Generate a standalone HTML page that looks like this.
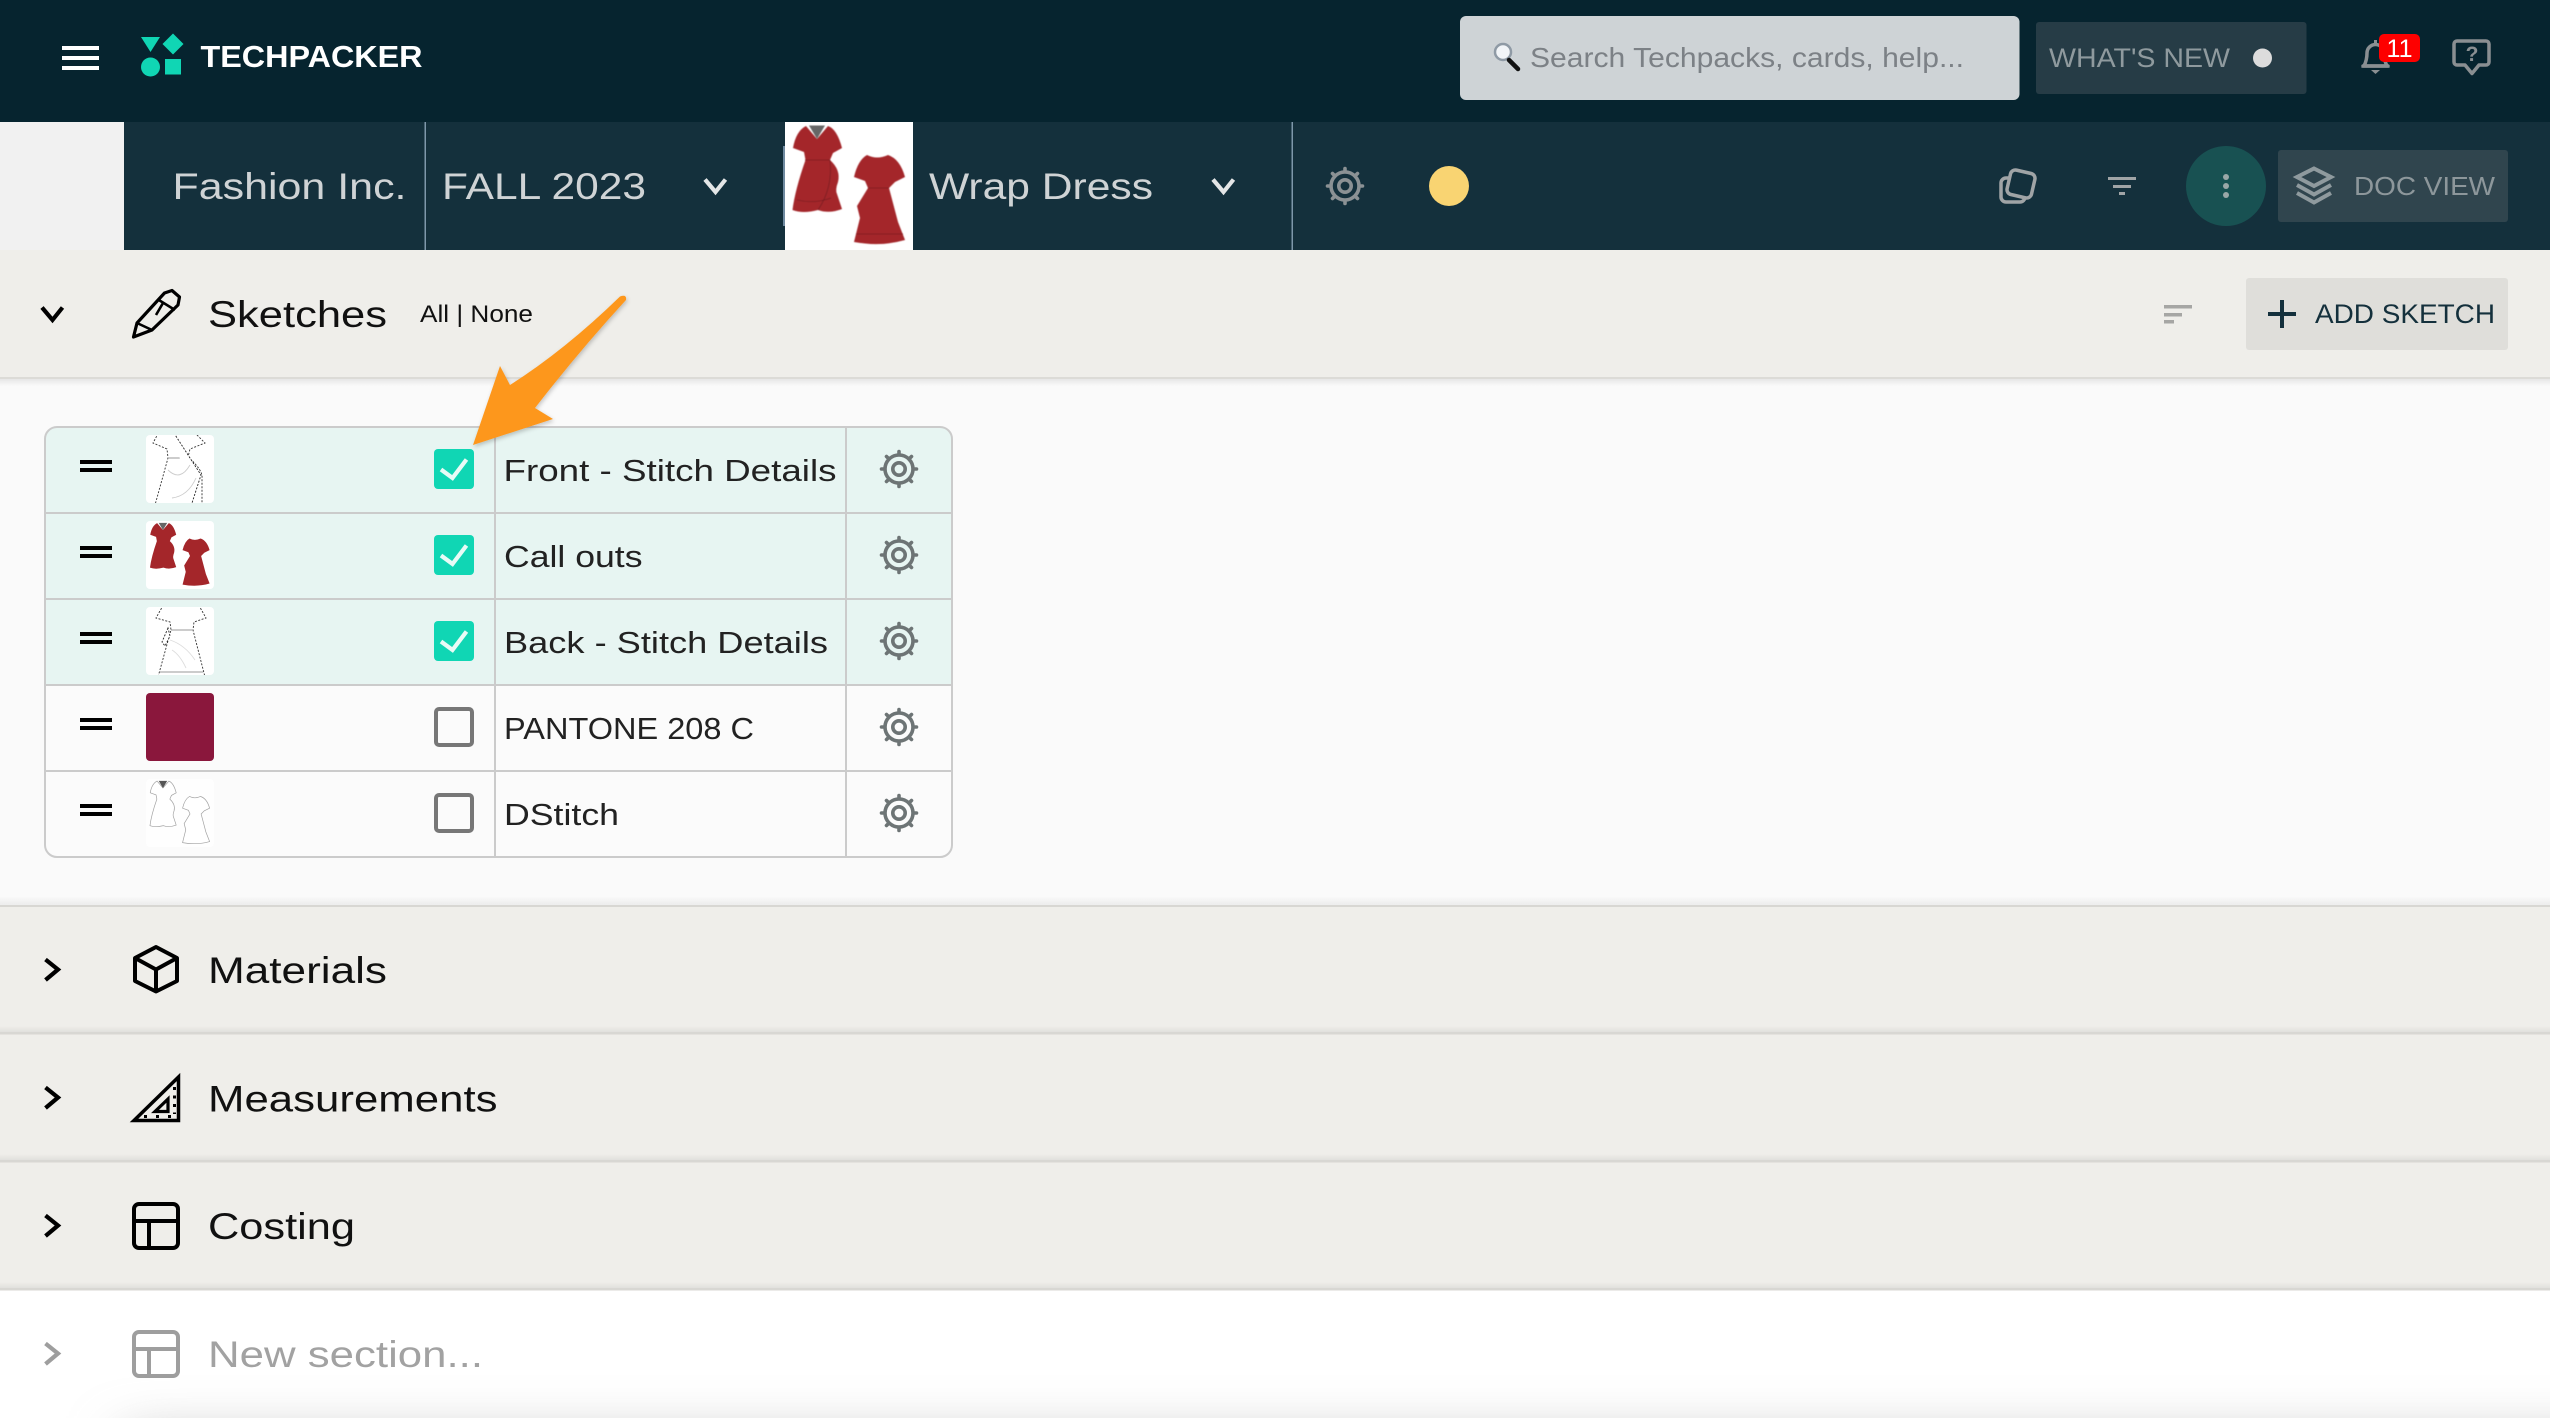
<!DOCTYPE html>
<html lang="en">
<head>
<meta charset="utf-8">
<title>Techpacker</title>
<style>
html,body{margin:0;padding:0;background:#fff;width:2550px;height:1418px;overflow:hidden}
svg{display:block;position:absolute;left:0;top:0}
text{font-family:"Liberation Sans",Arial,sans-serif}
</style>
</head>
<body>
<svg xmlns="http://www.w3.org/2000/svg" width="2550" height="1418" viewBox="0 0 2550 1418">
<defs>
  <filter id="blur" x="-20%" y="-400%" width="140%" height="900%"><feGaussianBlur stdDeviation="28"/></filter>
  <filter id="sh" x="-20%" y="-20%" width="140%" height="140%"><feDropShadow dx="1" dy="2" stdDeviation="2" flood-color="#000" flood-opacity=".22"/></filter>
  <filter id="soft" x="-20%" y="-20%" width="140%" height="140%"><feGaussianBlur stdDeviation=".5"/></filter>
  <linearGradient id="down" x1="0" y1="0" x2="0" y2="1"><stop offset="0" stop-color="#000" stop-opacity=".09"/><stop offset="1" stop-color="#000" stop-opacity="0"/></linearGradient>
  <linearGradient id="up" x1="0" y1="1" x2="0" y2="0"><stop offset="0" stop-color="#000" stop-opacity=".06"/><stop offset="1" stop-color="#000" stop-opacity="0"/></linearGradient>
  <g id="gear" fill="none" stroke-width="3.600">
    <circle r="14"/><circle r="6.2"/>
    <g stroke-linecap="round">
      <path d="M0-15.500V-17.500M0 15.500V17.500M-15.500 0H-17.500M15.500 0H17.500M-11-11L-12.500-12.500M11-11L12.500-12.500M-11 11L-12.500 12.500M11 11L12.500 12.500"/>
    </g>
  </g>
  <g id="front">
    <path d="M21 4L32 17L43 4Q52 7 57 26L48 31L45 38Q56 48 53 60Q50 68 52 72L57 87Q44 92 33 88Q18 92 7.500 88Q10 68 20.500 38L19 30L8 26Q11 9 21 4Z"/>
  </g>
  <g id="back">
    <path d="M82 33Q92 38 103 33Q115 37 120 55L110 60L104 66L113 100L120 118Q96 125 69 120L75 96L72 84L83 66L80 59L69 55Q73 38 82 33Z"/>
  </g>
  <g id="hand" fill="#000"><rect x="80" y="0" width="32" height="4"/><rect x="80" y="8" width="32" height="4"/></g>
  <path id="chev" d="M-6.500-10.500L6-.5L-6.500 10" fill="none" stroke-width="4.200" stroke-linejoin="miter"/>
  <clipPath id="c1"><rect x="146" y="435" width="68" height="68" rx="4"/></clipPath>
  <clipPath id="c3"><rect x="146" y="607" width="68" height="68" rx="4"/></clipPath>
  <clipPath id="tbl"><rect x="45" y="427" width="907" height="430" rx="12"/></clipPath>
</defs>

<!-- page backgrounds -->
<rect width="2550" height="1418" fill="#fff"/>
<rect y="0" width="2550" height="122" fill="#06242f"/>
<rect y="122" width="2550" height="128" fill="#14303c"/>
<rect y="122" width="124" height="128" fill="#f1f1f1"/>
<rect y="250" width="2550" height="128" fill="#efeeea"/>
<rect y="378" width="2550" height="528" fill="#fafafa"/>
<rect y="378" width="2550" height="8" fill="url(#down)"/>
<rect y="377" width="2550" height="2" fill="#dcdbd7"/>

<!-- top bar -->
<g fill="#fff"><rect x="62" y="46" width="37" height="4"/><rect x="62" y="56" width="37" height="4"/><rect x="62" y="66" width="37" height="4"/></g>
<g fill="#10d6b4">
  <path d="M141 37H160L150.500 52Z"/>
  <path d="M173 33.500L183.500 44L173 54.500L162.500 44Z"/>
  <circle cx="150.500" cy="67" r="9.500"/>
  <rect x="165" y="59" width="16" height="15.500"/>
</g>
<text x="200.500" y="67" font-size="31" font-weight="700" fill="#fff" textLength="222" lengthAdjust="spacingAndGlyphs">TECHPACKER</text>

<rect x="1460" y="16" width="559.500" height="84" rx="6" fill="#ced3d6"/>
<circle cx="1503" cy="52" r="8" fill="#f2f5f8" stroke="#8f9aa5" stroke-width="2.500"/>
<path d="M1509 60L1518 69" stroke="#111" stroke-width="4.500" stroke-linecap="round"/>
<text x="1530" y="67" font-size="28" fill="#7c8186" textLength="434" lengthAdjust="spacingAndGlyphs">Search Techpacks, cards, help...</text>

<rect x="2036" y="22" width="270.500" height="72" rx="3" fill="#263c46"/>
<text x="2049" y="67" font-size="27" fill="#8f9a9e" textLength="181" lengthAdjust="spacingAndGlyphs">WHAT'S NEW</text>
<circle cx="2262.500" cy="58" r="9.500" fill="#dcdcdc"/>

<g fill="none" stroke="#8a8f92" stroke-width="3.500">
  <path d="M2364 66Q2367 60 2367 53A8.500 8.500 0 0 1 2384 53Q2384 60 2387 66Z"/>
  <path d="M2363 66H2388" stroke-linecap="round"/>
  <path d="M2375.500 44V40" stroke-width="3"/>
</g>
<path d="M2371 70H2380L2375.500 74Z" fill="#8a8f92"/>
<rect x="2379" y="34" width="41" height="28" rx="5" fill="#fe0000"/>
<text x="2399.500" y="57" font-size="25" fill="#fff" text-anchor="middle">11</text>
<path d="M2457 41H2486A3 3 0 0 1 2489 44V62A3 3 0 0 1 2486 65H2479L2472 73.500L2465 65H2457A3 3 0 0 1 2454 62V44A3 3 0 0 1 2457 41Z" fill="none" stroke="#8a8f92" stroke-width="3.500" stroke-linejoin="round"/>
<text x="2472" y="61" font-size="21" font-weight="700" fill="#8a8f92" text-anchor="middle">?</text>

<!-- sub bar -->
<text x="172.500" y="199" font-size="37" fill="#cfd3d5" textLength="234" lengthAdjust="spacingAndGlyphs">Fashion Inc.</text>
<rect x="424.500" y="122" width="1.500" height="128" fill="#7e97aa"/>
<text x="442" y="199" font-size="37" fill="#cfd3d5" textLength="204" lengthAdjust="spacingAndGlyphs">FALL 2023</text>
<use href="#chev" transform="translate(715 186) rotate(90)" stroke="#e4e6e7"/>
<rect x="783" y="146" width="2" height="80" fill="#6f8aa0"/>
<rect x="785" y="122" width="128" height="128" fill="#fff"/>
<g transform="translate(785 122)" filter="url(#soft)">
  <use href="#front" fill="#a4262c"/>
  <path d="M24 3.500H40L32 17Z" fill="#666"/>
  <path d="M20 38H45M33 88Q48 66 45 38M12 78Q30 82 46 76" fill="none" stroke="#7a1a20" stroke-width=".8"/>
  <use href="#back" fill="#a4262c"/>
  <path d="M83 66H104M71 112H118" fill="none" stroke="#7a1a20" stroke-width=".8"/>
</g>
<text x="929" y="199" font-size="37" fill="#cfd3d5" textLength="224" lengthAdjust="spacingAndGlyphs">Wrap Dress</text>
<use href="#chev" transform="translate(1223 186) rotate(90)" stroke="#e4e6e7"/>
<rect x="1291.500" y="122" width="1.500" height="128" fill="#7e97aa"/>
<use href="#gear" transform="translate(1345 186)" stroke="#8b9194"/>
<circle cx="1449" cy="186" r="20" fill="#f9d472"/>

<g fill="none" stroke="#a0a4a6" stroke-width="3.500">
  <rect x="2001" y="178" width="24" height="24" rx="5"/>
  <rect x="2008.500" y="171.500" width="25" height="25" rx="5" fill="#14303c" transform="rotate(13 2021 184)"/>
</g>
<g fill="#a0a4a6"><rect x="2108" y="177" width="28" height="3"/><rect x="2113" y="185" width="18" height="3"/><rect x="2119" y="192" width="6" height="3"/></g>
<circle cx="2226" cy="186" r="40" fill="#185152"/>
<g fill="#9aa7a7"><circle cx="2226" cy="177" r="3"/><circle cx="2226" cy="186" r="3"/><circle cx="2226" cy="195" r="3"/></g>
<rect x="2278" y="150" width="230" height="72" rx="3" fill="#30454e"/>
<g fill="none" stroke="#8f9a9e" stroke-width="4">
  <path d="M2314 168.500L2331 177L2314 186L2297 177Z"/>
  <path d="M2297 185L2314 194.500L2331 185"/>
  <path d="M2297 193L2314 202.500L2331 193"/>
</g>
<text x="2354" y="195" font-size="26" fill="#8d979b" textLength="141" lengthAdjust="spacingAndGlyphs">DOC VIEW</text>

<!-- sketches header -->
<use href="#chev" transform="translate(52 314) rotate(90)" stroke="#000"/>
<g fill="none" stroke="#000" stroke-linejoin="round">
  <path d="M133.500 337L137 323L164.500 293L172 290.500L179.500 297L178 305L152 330Z" stroke-width="3.200"/>
  <path d="M137 323L152 330M158 299.500L175 310M163 303L156 315" stroke-width="2.600"/>
</g>
<text x="208" y="327" font-size="37" fill="#111" textLength="179" lengthAdjust="spacingAndGlyphs">Sketches</text>
<text x="420" y="322" font-size="24" fill="#111" textLength="113" lengthAdjust="spacingAndGlyphs">All | None</text>
<g fill="#a6a6a4"><rect x="2164" y="305" width="28" height="3.500"/><rect x="2164" y="313" width="18" height="3.500"/><rect x="2164" y="320" width="10" height="3.500"/></g>
<rect x="2246" y="278" width="262" height="72" rx="3" fill="#dfdeda"/>
<path d="M2268 314H2296M2282 300V328" stroke="#14303c" stroke-width="4"/>
<text x="2315" y="323" font-size="27" fill="#14303c" textLength="180" lengthAdjust="spacingAndGlyphs">ADD SKETCH</text>

<!-- table -->
<g clip-path="url(#tbl)">
  <rect x="45" y="427" width="907" height="258" fill="#e7f5f2"/>
  <rect x="45" y="685" width="907" height="172" fill="#fbfbfb"/>
</g>
<g stroke="#cbcbcb" stroke-width="2" fill="none">
  <rect x="45" y="427" width="907" height="430" rx="12"/>
  <path d="M45 513H952M45 599H952M45 685H952M45 771H952M495 427V857M846 427V857"/>
</g>

<use href="#hand" transform="translate(0 460)"/>
<use href="#hand" transform="translate(0 546)"/>
<use href="#hand" transform="translate(0 632)"/>
<use href="#hand" transform="translate(0 718)"/>
<use href="#hand" transform="translate(0 804)"/>

<!-- thumbs -->
<rect x="146" y="435" width="68" height="68" rx="4" fill="#fff"/>
<g clip-path="url(#c1)" fill="#fff" stroke="#333" stroke-width=".9" stroke-dasharray="2 1.500">
  <path d="M160 430L153 443L167 449L168 458L155 505M192 430L205 443L190 449L188 457Q203 470 202 478L202 505"/>
  <path d="M168 458H188" stroke-dasharray="none" stroke="#999"/>
  <path d="M172 430L190 458L201 475L192 503" stroke="#222"/>
  <path d="M168 470Q180 482 190 465M172 498Q188 496 196 478" stroke="#ccc" stroke-dasharray="none"/>
</g>
<rect x="146" y="521" width="68" height="68" rx="4" fill="#fff"/>
<g transform="translate(146 521) scale(.53)" filter="url(#soft)">
  <use href="#front" fill="#a4262c"/>
  <path d="M24 3.500H40L32 17Z" fill="#666"/>
  <use href="#back" fill="#a4262c"/>
</g>
<rect x="146" y="607" width="68" height="68" rx="4" fill="#fff"/>
<g clip-path="url(#c3)" fill="#fff" stroke="#333" stroke-width=".9" stroke-dasharray="2 1.500">
  <path d="M165 602L156 618L170 622L171 630L158 677M197 602L206 618L194 622L193 630L205 677"/>
  <path d="M171 630H193M160 672H203" stroke="#999" stroke-dasharray="none"/>
  <path d="M168 628L162 642L165 646L170 636Z" stroke="#222"/>
  <path d="M170 640Q185 645 195 660M172 650Q180 655 186 668" stroke="#ddd" stroke-dasharray="none"/>
</g>
<rect x="146" y="693" width="68" height="68" rx="4" fill="#8a173c"/>
<rect x="146" y="779" width="68" height="68" rx="4" fill="#fefefe"/>
<g transform="translate(146 779) scale(.53)" fill="#fff" stroke="#a2a2a2" stroke-width="1.300">
  <use href="#front"/>
  <path d="M24 3.500H40L32 17Z" fill="#555" stroke="none"/>
  <use href="#back"/>
</g>

<!-- checkboxes -->
<g fill="#10d6b4">
  <rect x="434" y="449" width="40" height="40" rx="4"/>
  <rect x="434" y="535" width="40" height="40" rx="4"/>
  <rect x="434" y="621" width="40" height="40" rx="4"/>
</g>
<g fill="none" stroke="#e8fbf6" stroke-width="4.200">
  <path d="M441 469.500L452.500 478L466.500 459.500"/>
  <path d="M441 555.500L452.500 564L466.500 545.500"/>
  <path d="M441 641.500L452.500 650L466.500 631.500"/>
</g>
<g fill="none" stroke="#777" stroke-width="4">
  <rect x="436" y="709" width="36" height="36" rx="3"/>
  <rect x="436" y="795" width="36" height="36" rx="3"/>
</g>

<!-- row text -->
<g font-size="31" fill="#222">
  <text x="503.500" y="481" textLength="333" lengthAdjust="spacingAndGlyphs">Front - Stitch Details</text>
  <text x="504" y="567" textLength="138.500" lengthAdjust="spacingAndGlyphs">Call outs</text>
  <text x="504" y="653" textLength="324" lengthAdjust="spacingAndGlyphs">Back - Stitch Details</text>
  <text x="504" y="739" textLength="250" lengthAdjust="spacingAndGlyphs">PANTONE 208 C</text>
  <text x="504" y="825" textLength="115" lengthAdjust="spacingAndGlyphs">DStitch</text>
</g>
<use href="#gear" transform="translate(899 469)" stroke="#6d7475"/>
<use href="#gear" transform="translate(899 555)" stroke="#6d7475"/>
<use href="#gear" transform="translate(899 641)" stroke="#6d7475"/>
<use href="#gear" transform="translate(899 727)" stroke="#6d7475"/>
<use href="#gear" transform="translate(899 813)" stroke="#6d7475"/>

<!-- arrow -->
<path d="M626 300Q627 294 620 296.500Q565 350 510 385L500 366L473 445L553 419L535 408Q580 350 626 300Z" fill="#fd971d" filter="url(#sh)"/>

<!-- lower sections -->
<rect y="896" width="2550" height="10" fill="url(#up)"/>
<rect y="906" width="2550" height="128" fill="#efeeea"/>
<rect y="1034" width="2550" height="128" fill="#efeeea"/>
<rect y="1162" width="2550" height="128" fill="#efeeea"/>
<g fill="#d8d7d3"><rect y="1032" width="2550" height="2.500"/><rect y="1160" width="2550" height="2.500"/><rect y="1288" width="2550" height="2.500"/><rect y="905" width="2550" height="2"/></g>
<rect y="1026" width="2550" height="6" fill="url(#up)"/>
<rect y="1154" width="2550" height="6" fill="url(#up)"/>
<rect y="1282" width="2550" height="6" fill="url(#up)"/>

<use href="#chev" transform="translate(52 970)" stroke="#000"/>
<use href="#chev" transform="translate(52 1098)" stroke="#000"/>
<use href="#chev" transform="translate(52 1226)" stroke="#000"/>
<use href="#chev" transform="translate(52 1354)" stroke="#9e9e9e"/>

<g fill="none" stroke="#000" stroke-width="4" stroke-linejoin="round">
  <path d="M156 947L177 958V981L156 991.500L135 981V958Z"/>
  <path d="M135 958L156 969.500L177 958M156 969.500V991.500"/>
</g>
<g fill="none" stroke="#000" stroke-linejoin="miter">
  <path d="M178.500 1077L134 1120.500H178.500Z" stroke-width="3.500"/>
  <path d="M168 1099L155 1111.500H168Z" stroke-width="3.200"/>
  <path d="M174.500 1087V1114" stroke-width="3" stroke-dasharray="3 5.500"/>
  <path d="M144 1116.500H172" stroke-width="3" stroke-dasharray="3 9"/>
</g>
<g fill="none" stroke="#000" stroke-width="4">
  <rect x="134" y="1204" width="44" height="44" rx="5"/>
  <path d="M134 1221H178M149 1221V1248"/>
</g>
<g fill="none" stroke="#9e9e9e" stroke-width="4">
  <rect x="134" y="1332" width="44" height="44" rx="5"/>
  <path d="M134 1349H178M149 1349V1376"/>
</g>
<g font-size="37" fill="#111">
  <text x="208" y="983" textLength="179" lengthAdjust="spacingAndGlyphs">Materials</text>
  <text x="208" y="1111.500" textLength="289.500" lengthAdjust="spacingAndGlyphs">Measurements</text>
  <text x="208" y="1239" textLength="147" lengthAdjust="spacingAndGlyphs">Costing</text>
  <text x="208" y="1367" textLength="275" lengthAdjust="spacingAndGlyphs" fill="#a2a2a2">New section...</text>
</g>
<!-- bottom fade -->
<rect x="125" y="1442" width="2600" height="40" fill="#aaaaaa" filter="url(#blur)"/>
</svg>
</body>
</html>
